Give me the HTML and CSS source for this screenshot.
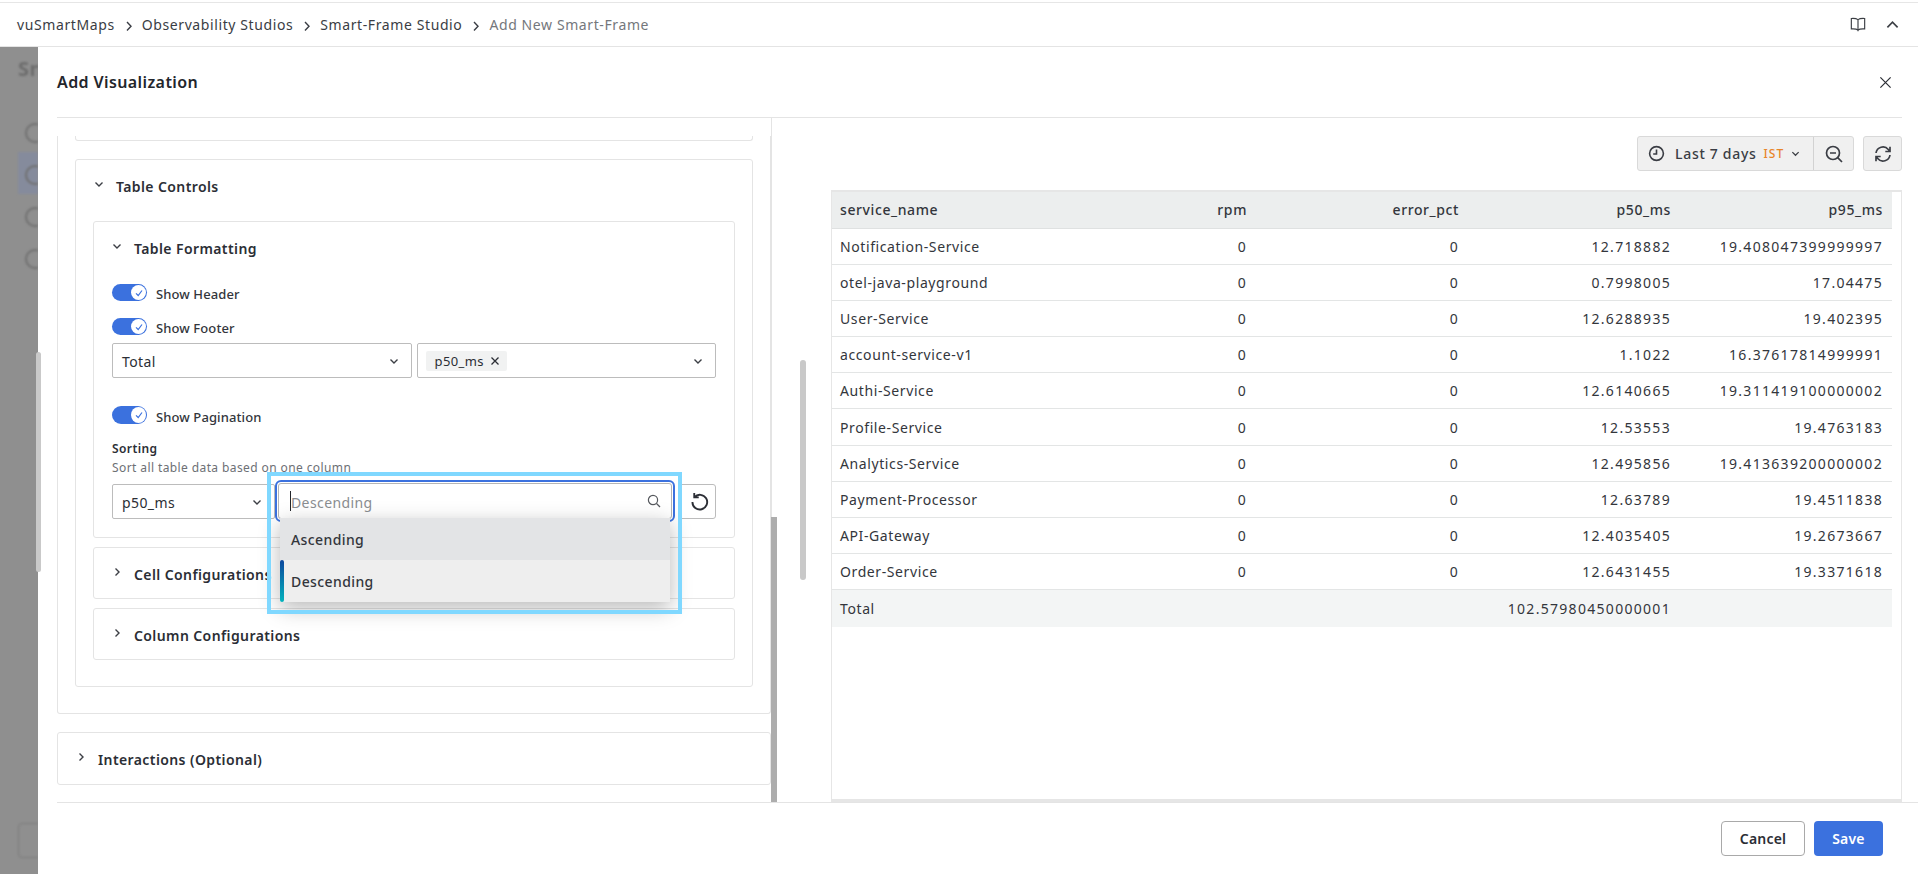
FILE: index.html
```html
<!DOCTYPE html>
<html lang="en">
<head>
    <meta charset="UTF-8">
    <title>Add New Smart-Frame</title>
    <link rel="stylesheet" href="styles.css">
</head>
<body>
    <div class="topbar">
        <nav class="crumbs">
            <span>vuSmartMaps</span>
            <svg class="crumb-sep" viewBox="0 0 10 12"><path d="M3 2l4 4.2L3 10.4"/></svg>
            <span>Observability Studios</span>
            <svg class="crumb-sep" viewBox="0 0 10 12"><path d="M3 2l4 4.2L3 10.4"/></svg>
            <span>Smart-Frame Studio</span>
            <svg class="crumb-sep" viewBox="0 0 10 12"><path d="M3 2l4 4.2L3 10.4"/></svg>
            <span class="crumb-current">Add New Smart-Frame</span>
        </nav>
        <div class="topbar-icons">
            <svg class="icon-book" viewBox="0 0 18 16"><path d="M9 2.5C7.5 1.4 4.5 1 1.5 1.2V13c3-.2 6 .1 7.5 1.2 1.500-1.100 4.500-1.400 7.500-1.200V1.200C13.500 1 10.500 1.400 9 2.500zM9 2.500v13"/></svg>
            <svg class="icon-up" viewBox="0 0 14 9"><path d="M1.500 7.500L7 2l5.500 5.500"/></svg>
        </div>
    </div>

    <div class="stage">
        <!-- page behind the modal, dimmed and blurred -->
        <div class="behind">
            <div class="behind-title">Sm</div>
            <div class="behind-step"></div>
            <div class="behind-step behind-step-on"></div>
            <div class="behind-step"></div>
            <div class="behind-step"></div>
            <div class="behind-btn"></div>
        </div>
        <div class="behind-scroll"></div>

        <div class="modal">
            <div class="modal-head">
                <h2>Add Visualization</h2>
                <svg class="icon-close" viewBox="0 0 14 14"><path d="M1.500 1.500l11 11M12.500 1.500l-11 11"/></svg>
            </div>

            <div class="modal-body">
                <div class="left-pane">
                    <div class="outer-card">
                        <div class="stub-card"></div>

                        <div class="card card-controls">
                            <div class="card-title">
                                <svg class="chev" viewBox="0 0 10 10"><path d="M1.500 3.500L5 7l3.500-3.500"/></svg>
                                <span>Table Controls</span>
                            </div>

                            <div class="card card-format">
                                <div class="card-title">
                                    <svg class="chev" viewBox="0 0 10 10"><path d="M1.500 3.500L5 7l3.500-3.500"/></svg>
                                    <span>Table Formatting</span>
                                </div>
                                <div class="format-body">
                                    <div class="toggle-row">
                                        <span class="toggle"><span class="knob"><svg viewBox="0 0 10 10"><path d="M2 5.300l2.200 2.200L8 2.500"/></svg></span></span>
                                        <label>Show Header</label>
                                    </div>
                                    <div class="toggle-row toggle-footer">
                                        <span class="toggle"><span class="knob"><svg viewBox="0 0 10 10"><path d="M2 5.300l2.200 2.200L8 2.500"/></svg></span></span>
                                        <label>Show Footer</label>
                                    </div>
                                    <div class="select-pair">
                                        <div class="select">
                                            <span>Total</span>
                                            <svg class="chev" viewBox="0 0 10 10"><path d="M1.500 3.500L5 7l3.500-3.500"/></svg>
                                        </div>
                                        <div class="select select-tags">
                                            <span class="tag">p50_ms <svg viewBox="0 0 10 10"><path d="M1.500 1.500l7 7M8.500 1.500l-7 7"/></svg></span>
                                            <svg class="chev" viewBox="0 0 10 10"><path d="M1.500 3.500L5 7l3.500-3.500"/></svg>
                                        </div>
                                    </div>
                                    <div class="toggle-row toggle-pagination">
                                        <span class="toggle"><span class="knob"><svg viewBox="0 0 10 10"><path d="M2 5.300l2.200 2.200L8 2.500"/></svg></span></span>
                                        <label>Show Pagination</label>
                                    </div>
                                    <div class="sort-label">Sorting</div>
                                    <div class="sort-hint">Sort all table data based on one column</div>
                                    <div class="sort-row">
                                        <div class="select select-column">
                                            <span>p50_ms</span>
                                            <svg class="chev" viewBox="0 0 10 10"><path d="M1.500 3.500L5 7l3.500-3.500"/></svg>
                                        </div>
                                        <div class="select-open">
                                            <div class="search-box">
                                                <span class="caret"></span>
                                                <span class="placeholder">Descending</span>
                                                <svg class="icon-search" viewBox="0 0 14 14"><circle cx="6" cy="6" r="4.600"/><path d="M9.500 9.500L13 13"/></svg>
                                            </div>
                                            <ul class="menu">
                                                <li class="menu-hover">Ascending</li>
                                                <li class="menu-selected">Descending</li>
                                            </ul>
                                            <div class="highlight"></div>
                                        </div>
                                        <button class="reset-btn">
                                            <svg viewBox="0 0 20 20"><path d="M5.200 5.800A7 7 0 1 1 3.300 10.500M5 1.800v4.300h4.300"/></svg>
                                        </button>
                                    </div>
                                </div>
                            </div>

                            <div class="card card-closed">
                                <div class="card-title">
                                    <svg class="chev" viewBox="0 0 10 10"><path d="M3.500 1.500L7 5 3.500 8.500"/></svg>
                                    <span>Cell Configurations</span>
                                </div>
                            </div>
                            <div class="card card-closed">
                                <div class="card-title">
                                    <svg class="chev" viewBox="0 0 10 10"><path d="M3.500 1.500L7 5 3.500 8.500"/></svg>
                                    <span>Column Configurations</span>
                                </div>
                            </div>
                        </div>
                    </div>

                    <div class="card card-interactions">
                        <div class="card-title">
                            <svg class="chev" viewBox="0 0 10 10"><path d="M3.500 1.500L7 5 3.500 8.500"/></svg>
                            <span>Interactions (Optional)</span>
                        </div>
                    </div>
                </div>

                <div class="pane-scroll pane-scroll-left"></div>
                <div class="pane-scroll pane-scroll-right"></div>

                <div class="right-pane">
                    <div class="time-bar">
                        <div class="time-group">
                            <div class="time-range">
                                <svg class="icon-clock" viewBox="0 0 18 18"><circle cx="9" cy="9" r="7.300"/><path d="M9 4.800V9.500H5.500"/></svg>
                                <span class="time-text">Last 7 days</span>
                                <span class="time-zone">IST</span>
                                <svg class="chev" viewBox="0 0 10 10"><path d="M1.500 3.500L5 7l3.500-3.500"/></svg>
                            </div>
                            <div class="time-zoom">
                                <svg viewBox="0 0 18 18"><circle cx="8" cy="8" r="6.500"/><path d="M5 8h6M12.700 12.700L17 17"/></svg>
                            </div>
                        </div>
                        <button class="refresh-btn">
                            <svg viewBox="0 0 18 18"><path d="M2 8a7 7 0 0 1 12.300-3.500L16 6.500M16 1.800v4.700h-4.700M16 10a7 7 0 0 1-12.300 3.500L2 11.500M2 16.200v-4.700h4.700"/></svg>
                        </button>
                    </div>

                    <div class="table-box">
                        <table class="data-table">
                            <thead>
                                <tr><th>service_name</th><th>rpm</th><th>error_pct</th><th>p50_ms</th><th>p95_ms</th></tr>
                            </thead>
                            <tbody>
                                <tr><td>Notification-Service</td><td>0</td><td>0</td><td>12.718882</td><td>19.408047399999997</td></tr>
                                <tr><td>otel-java-playground</td><td>0</td><td>0</td><td>0.7998005</td><td>17.04475</td></tr>
                                <tr><td>User-Service</td><td>0</td><td>0</td><td>12.6288935</td><td>19.402395</td></tr>
                                <tr><td>account-service-v1</td><td>0</td><td>0</td><td>1.1022</td><td>16.37617814999991</td></tr>
                                <tr><td>Authi-Service</td><td>0</td><td>0</td><td>12.6140665</td><td>19.311419100000002</td></tr>
                                <tr><td>Profile-Service</td><td>0</td><td>0</td><td>12.53553</td><td>19.4763183</td></tr>
                                <tr><td>Analytics-Service</td><td>0</td><td>0</td><td>12.495856</td><td>19.413639200000002</td></tr>
                                <tr><td>Payment-Processor</td><td>0</td><td>0</td><td>12.63789</td><td>19.4511838</td></tr>
                                <tr><td>API-Gateway</td><td>0</td><td>0</td><td>12.4035405</td><td>19.2673667</td></tr>
                                <tr><td>Order-Service</td><td>0</td><td>0</td><td>12.6431455</td><td>19.3371618</td></tr>
                            </tbody>
                            <tfoot>
                                <tr><td>Total</td><td></td><td></td><td>102.57980450000001</td><td></td></tr>
                            </tfoot>
                        </table>
                    </div>
                </div>
            </div>

            <div class="modal-foot">
                <button class="btn-cancel">Cancel</button>
                <button class="btn-save">Save</button>
            </div>
        </div>
    </div>
</body>
</html>
```

FILE: styles.css
```css
* {
    box-sizing: border-box;
}

html, body {
    margin: 0;
    height: 100%;
    overflow: hidden;
}

body {
    font-family: "Noto Sans", "Liberation Sans", sans-serif;
    font-size: 14px;
    letter-spacing: 0.4px;
    color: #2b2e35;
    background: #fff;
    display: flex;
    flex-direction: column;
}

svg {
    display: block;
    fill: none;
    stroke: currentColor;
}

/* top bar */
.topbar {
    height: 45px;
    flex: none;
    margin-top: 2px;
    border-top: 1px solid #e6e6e6;
    border-bottom: 1px solid #e4e4e4;
    padding: 0 17px;
    display: flex;
    align-items: center;
    justify-content: space-between;
    background: #fff;
}

.crumbs {
    display: flex;
    align-items: center;
    color: #3a3d44;
    letter-spacing: 0.6px;
}

.crumb-sep {
    width: 10px;
    height: 12px;
    margin: 2px 8px 0 9px;
    stroke-width: 1.4;
}

.crumb-current {
    color: #74777c;
}

.topbar-icons {
    display: flex;
    align-items: center;
    gap: 20px;
    color: #3c3f45;
}

.icon-book {
    width: 16px;
    height: 15px;
    stroke-width: 1.300;
}

.icon-up {
    width: 13px;
    height: 9px;
    stroke-width: 1.800;
    margin-right: 2px;
}

/* page behind the modal */
.stage {
    flex: 1;
    position: relative;
    min-height: 0;
    background: #8f8f8f;
}

.behind {
    width: 38px;
    height: 100%;
    overflow: hidden;
    padding: 8px 0 0 18px;
    filter: blur(1.2px);
    color: #6c6c6c;
    display: flex;
    flex-direction: column;
}

.behind-title {
    font-size: 20px;
    font-weight: 700;
    height: 35px;
    margin-bottom: 20px;
    white-space: nowrap;
}

.behind-step {
    width: 20px;
    height: 42px;
    position: relative;
}

.behind-step::after {
    content: "";
    display: block;
    width: 16px;
    height: 16px;
    margin: 13px 0 0 7px;
    border: 2px solid #707070;
    border-radius: 50%;
}

.behind-step-on {
    background: #858b9c;
}

.behind-btn {
    margin-top: auto;
    margin-bottom: 16px;
    width: 40px;
    height: 35px;
    border: 1px solid #7c7c7c;
    border-radius: 4px;
}

.behind-scroll {
    position: absolute;
    left: 36px;
    top: 305px;
    width: 5px;
    height: 220px;
    border-radius: 3px;
    background: #c9c9c9;
    z-index: 2;
}

/* modal */
.modal {
    position: absolute;
    top: 0;
    left: 38px;
    right: 0;
    bottom: 0;
    background: #fff;
    display: flex;
    flex-direction: column;
}

.modal-head {
    height: 71px;
    flex: none;
    margin: 0 16px 0 19px;
    border-bottom: 1px solid #e4e4e4;
    display: flex;
    align-items: center;
    justify-content: space-between;
}

.modal-head h2 {
    margin: 0;
    font-size: 16px;
    font-weight: 600;
    color: #23262c;
}

.icon-close {
    width: 13px;
    height: 13px;
    margin-right: 10px;
    stroke-width: 1.300;
    color: #2b2e35;
}

.modal-body {
    flex: 1;
    min-height: 0;
    position: relative;
    display: flex;
    margin-left: 19px;
    border-bottom: 1px solid #e4e4e4;
}

.modal-foot {
    height: 71px;
    flex: none;
    padding: 18px 35px 0 0;
    display: flex;
    justify-content: flex-end;
    gap: 9px;
}

.modal-foot button {
    height: 35px;
    font: inherit;
    letter-spacing: 0.2px;
    font-weight: 600;
    border-radius: 4px;
}

.btn-cancel {
    width: 84px;
    background: #fff;
    color: #2b2e35;
    border: 1px solid #a9a9a9;
}

.btn-save {
    width: 69px;
    background: #3b71de;
    color: #fff;
    border: none;
}

/* left pane */
.left-pane {
    width: 715px;
    flex: none;
    padding-top: 18px;
    overflow: hidden;
    border-right: 1px solid #e4e4e4;
}

.outer-card {
    height: 578px;
    padding: 0 17px;
    border: 1px solid #e4e4e4;
    border-top: none;
    border-radius: 0 0 3px 3px;
}

.stub-card {
    height: 5px;
    border: 1px solid #e4e4e4;
    border-top: none;
    border-radius: 0 0 3px 3px;
    margin-bottom: 18px;
}

.card {
    border: 1px solid #e4e4e4;
    border-radius: 3px;
    background: #fff;
}

.card-title {
    height: 52px;
    display: flex;
    align-items: center;
    padding-left: 18px;
    gap: 12px;
    font-weight: 600;
    color: #2b2e35;
}

.chev {
    width: 10px;
    height: 10px;
    flex: none;
    stroke-width: 1.400;
    color: #3c3f45;
}

.card-title .chev {
    margin-top: -5px;
}

.card-controls {
    height: 528px;
    padding: 0 17px;
}

.card-controls > .card-title {
    height: 53px;
    margin: 0 -17px 8px;
}

.card-format {
    height: 317px;
}

.card-format > .card-title {
    height: 52px;
    margin-bottom: 1px;
}

.format-body {
    padding: 9px 18px 0 18px;
}

.toggle-row {
    display: flex;
    align-items: center;
    gap: 9px;
    font-size: 13px;
    font-weight: 500;
    letter-spacing: 0.1px;
    height: 17px;
    color: #33363c;
}

.toggle-row label {
    margin-top: 3px;
}

.toggle-footer {
    margin-top: 17px;
}

.toggle-pagination {
    margin-top: 28px;
    height: 18px;
}

.toggle {
    width: 35px;
    height: 100%;
    border-radius: 9px;
    background: #3b71de;
    position: relative;
    flex: none;
}

.knob {
    position: absolute;
    right: 1px;
    top: 1px;
    bottom: 1px;
    width: 15px;
    border-radius: 50%;
    background: #fff;
    color: #3b71de;
    display: flex;
    align-items: center;
    justify-content: center;
}

.knob svg {
    width: 10px;
    height: 10px;
    stroke-width: 1.200;
}

.select-pair {
    margin-top: 8px;
    display: grid;
    grid-template-columns: 1fr 1fr;
    gap: 5px;
}

.select {
    height: 35px;
    border: 1px solid #bcbcbc;
    border-radius: 2px;
    display: flex;
    align-items: center;
    justify-content: space-between;
    padding: 0 12px 0 9px;
    background: #fff;
}

.select > span:not(.tag) {
    margin-top: 2px;
}

.select-tags {
    padding-left: 8px;
}

.tag {
    height: 20px;
    padding: 0 7px 0 9px;
    background: #f1f2f2;
    border-radius: 2px;
    display: flex;
    align-items: center;
    gap: 6px;
    font-size: 13px;
}

.tag svg {
    width: 10px;
    height: 10px;
    stroke-width: 1.300;
}

.sort-label {
    margin-top: 16px;
    height: 18px;
    line-height: 18px;
    font-size: 12px;
    font-weight: 600;
}

.sort-hint {
    height: 19px;
    line-height: 19px;
    font-size: 12px;
    color: #6d7075;
}

.sort-row {
    margin-top: 7px;
    height: 35px;
    display: flex;
}

.select-column {
    width: 163px;
    flex: none;
}

.select-open {
    width: 400px;
    flex: none;
    position: relative;
}

.search-box {
    position: absolute;
    left: 0;
    right: 0;
    top: -4px;
    height: 42px;
    border: 2px solid #3b71de;
    border-radius: 6px;
    background: #fff;
    z-index: 3;
    padding: 2px 2px 3px 2px;
    display: flex;
    align-items: center;
}

.search-box::before {
    content: "";
    position: absolute;
    left: 1px;
    right: 1px;
    top: 1px;
    bottom: 1px;
    border: 1px solid #b5b5b5;
    border-radius: 3px;
}

.caret {
    width: 1px;
    height: 20px;
    margin-left: 11px;
    background: #23262c;
    flex: none;
}

.placeholder {
    color: #8a8d91;
    flex: 1;
    margin-top: 3px;
}

.icon-search {
    width: 14px;
    height: 14px;
    margin-right: 10px;
    stroke-width: 1.200;
    color: #55585d;
}

.menu {
    position: absolute;
    left: 5px;
    top: 34px;
    width: 390px;
    margin: 0;
    padding: 0;
    list-style: none;
    z-index: 4;
    box-shadow: 0 6px 20px rgba(0, 0, 0, 0.28);
    font-weight: 500;
}

.menu li {
    height: 42px;
    line-height: 44px;
    padding-left: 11px;
    color: #33363c;
}

.menu-hover {
    background: #e3e4e6;
}

.menu-selected {
    background: #eeeeee;
    position: relative;
}

.menu-selected::before {
    content: "";
    position: absolute;
    left: 0;
    top: 0;
    bottom: 0;
    width: 4px;
    border-radius: 2px;
    background: linear-gradient(#0c479d, #03b3bd);
}

.highlight {
    position: absolute;
    left: -8px;
    right: -7px;
    top: -12px;
    height: 142px;
    border: 4px solid #80d8ff;
    z-index: 5;
    pointer-events: none;
}

.reset-btn {
    margin-left: auto;
    width: 37px;
    height: 35px;
    padding: 0 0 0 3px;
    border: 1px solid #bcbcbc;
    border-radius: 0 3px 3px 0;
    background: #fff;
    color: #2b2e35;
    display: flex;
    align-items: center;
    justify-content: center;
}

.reset-btn svg {
    width: 21px;
    height: 21px;
    stroke-width: 1.800;
}

.card-closed {
    height: 52px;
    margin-top: 9px;
}

.card-interactions {
    margin-top: 18px;
    height: 53px;
}

.card-interactions .card-title {
    height: 53px;
}

/* scrollbars drawn over the panes */
.pane-scroll {
    position: absolute;
    width: 6px;
}

.pane-scroll-left {
    left: 714px;
    top: 399px;
    bottom: 0;
    background: #adadad;
}

.pane-scroll-right {
    left: 743px;
    top: 242px;
    height: 220px;
    background: #c9c9c9;
    border-radius: 3px;
}

/* right pane */
.right-pane {
    flex: 1;
    min-width: 0;
    padding: 18px 16px 0 59px;
    display: flex;
    flex-direction: column;
}

.time-bar {
    display: flex;
    justify-content: flex-end;
    gap: 9px;
    height: 35px;
    flex: none;
}

.time-group {
    display: flex;
    background: #f0f0f0;
    border: 1px solid #d9d9d9;
    border-radius: 3px;
    color: #3a3d44;
}

.time-range {
    width: 176px;
    display: flex;
    align-items: center;
    padding-left: 10px;
    border-right: 1px solid #d2d2d2;
}

.icon-clock {
    width: 17px;
    height: 17px;
    stroke-width: 1.700;
    flex: none;
}

.time-text {
    margin-left: 10px;
    font-weight: 500;
    letter-spacing: 0.7px;
}

.time-zone {
    margin-left: 7px;
    font-size: 12px;
    font-weight: 500;
    letter-spacing: 1px;
    color: #e8852a;
}

.time-range .chev {
    margin-left: 7px;
    width: 9px;
    height: 9px;
}

.time-zoom {
    width: 39px;
    display: flex;
    align-items: center;
    justify-content: center;
}

.time-zoom svg {
    width: 18px;
    height: 18px;
    stroke-width: 1.700;
}

.refresh-btn {
    width: 39px;
    height: 35px;
    padding: 0;
    background: #f0f0f0;
    border: 1px solid #d9d9d9;
    border-radius: 3px;
    color: #3a3d44;
    display: flex;
    align-items: center;
    justify-content: center;
}

.refresh-btn svg {
    width: 18px;
    height: 18px;
    stroke-width: 1.700;
}

.table-box {
    flex: 1;
    min-height: 0;
    margin-top: 19px;
    padding-right: 9px;
    border: 1px solid #e6e6e6;
    border-top-width: 2px;
    border-bottom-width: 3px;
}

.data-table {
    width: 100%;
    table-layout: fixed;
    border-collapse: collapse;
    letter-spacing: 0.6px;
    color: #33363c;
}

.data-table th,
.data-table td {
    padding: 0 9px 0 8px;
    text-align: right;
    font-weight: 400;
    white-space: nowrap;
}

.data-table th:first-child,
.data-table td:first-child {
    text-align: left;
}

.data-table tbody td:not(:first-child),
.data-table tfoot td:not(:first-child) {
    letter-spacing: 1.3px;
}

.data-table th {
    height: 36px;
    background: #eceeee;
    font-weight: 500;
    border-bottom: 1px solid #dfe1e1;
}

.data-table tbody td {
    height: 36.2px;
    border-bottom: 1px solid #e3e5e5;
}

.data-table tfoot td {
    height: 37px;
    background: #f3f5f5;
}
```
